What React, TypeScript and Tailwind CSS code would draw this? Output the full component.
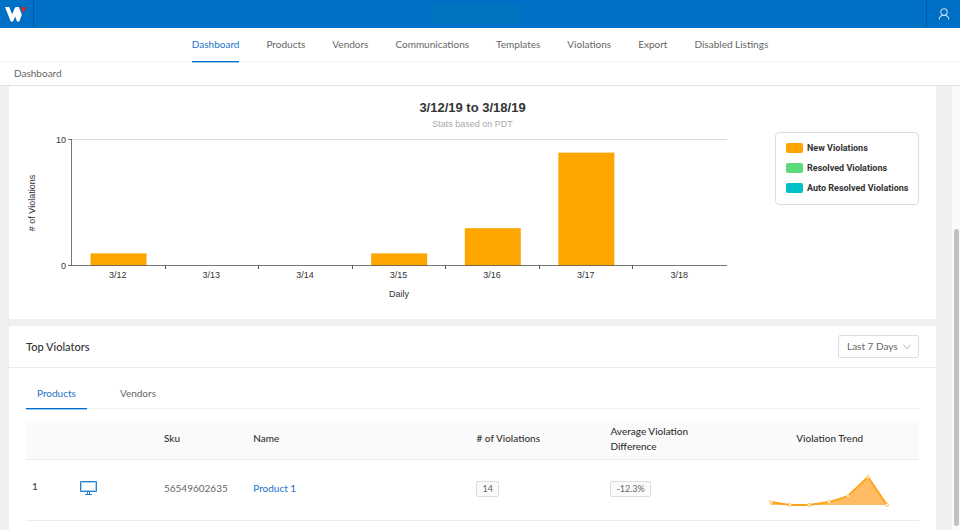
import * as React from 'react'
import {useState} from 'react'
import clsx from 'clsx'

const navItems = ['Dashboard', 'Products', 'Vendors', 'Communications', 'Templates', 'Violations', 'Export', 'Disabled Listings']

const days = [
	{label: '3/12', count: 1},
	{label: '3/13', count: 0},
	{label: '3/14', count: 0},
	{label: '3/15', count: 1},
	{label: '3/16', count: 3},
	{label: '3/17', count: 9},
	{label: '3/18', count: 0},
]

const legend = [
	{label: 'New Violations', color: 'bg-[#ffa500]'},
	{label: 'Resolved Violations', color: 'bg-[#5bdb79]'},
	{label: 'Auto Resolved Violations', color: 'bg-[#00c1c9]'},
]

const trend = [[2, 31], [21, 34], [40, 34], [60, 31], [79, 25], [99, 6], [118, 34]]

function Header() {
	return (
		<header className="flex h-7 bg-[#006fc6]">
			<a href="#" aria-label="Home" className="w-[34px] pl-[5px] flex items-center border-r border-[#005ba5]">
				<svg viewBox="0 0 21 15" className="w-[21px] h-[15px]" aria-hidden="true">
					<path d="M0 0h4.200l2.900 7.300L9.700 1.200C10 .4 10.600 0 11.300 0h2.500L16.800 7.800l-2.200 6c-.5 1.400-2.400 1.400-2.900 0L10.200 9.600l-1.800 4.200c-.6 1.400-2.500 1.400-3 0z" fill="#fff"/>
					<path d="M15.800 .3h5.200L18.400 6z" fill="#ff1a0a"/>
				</svg>
			</a>
			<div className="flex-grow flex items-center justify-center pr-2">
				<div className="w-[92px] h-[18px] bg-[#0074be]"></div>
			</div>
			<button aria-label="Account" className="w-[34px] flex items-center justify-center border-l border-[#005ba5]">
				<svg viewBox="0 0 12 12" className="w-3 h-3" fill="none" stroke="#c4e0f5" strokeWidth="1.1" aria-hidden="true">
					<circle cx="6" cy="4" r="3.200"/>
					<path d="M1.300 11.500C1.300 8.800 3.300 7.200 6 7.200s4.700 1.600 4.700 4.300"/>
				</svg>
			</button>
		</header>
	)
}

function ViolationsChart() {
	const left = 63
	const bottom = 134
	const step = 655 / days.length
	const unit = 12.6

	return (
		<svg viewBox="0 0 766 187" className="flex-1 min-w-0 h-auto text-[9px]" fill="#333" role="img" aria-label="Violations per day">
			<path d="M63 7.500H718" stroke="#dcdcdc"/>
			{days.map((day, i) => (
				<g key={day.label}>
					<rect x={left + step * i + 18.500} y={bottom - day.count * unit} width="56" height={day.count * unit} fill="#ffa500"/>
					{i > 0 && <path d={`M${Math.round(left + step * i) - .5} 134v3`} stroke="#555"/>}
					<text x={left + step * (i + .5) - 1} y="146" textAnchor="middle">{day.label}</text>
				</g>
			))}
			<path d="M59 7.500H63M62.500 7V134M59 133.500H718" stroke="#555" strokeOpacity=".8" fill="none"/>
			<text x="57" y="11" textAnchor="end">10</text>
			<text x="57" y="137" textAnchor="end">0</text>
			<text x="390" y="165" textAnchor="middle">Daily</text>
			<text transform="translate(26 71) rotate(-90)" textAnchor="middle"># of Violations</text>
		</svg>
	)
}

function ChartCard() {
	return (
		<section className="bg-white font-['Liberation_Sans',sans-serif] text-[#333]">
			<h2 className="pt-3 text-[13px] leading-[19px] font-bold text-center">3/12/19 to 3/18/19</h2>
			<p className="text-[9px] leading-[15px] text-center text-[#aaa]">Stats based on PDT</p>
			<div className="flex items-start pr-[17px]">
				<ViolationsChart/>
				<ul className="w-36 h-[73px] px-2.5 pb-px flex flex-col justify-center gap-2 border border-[#ddd] rounded font-[Roboto,sans-serif]">
					{legend.map(item => (
						<li key={item.label} className="flex items-center gap-1 text-[9px] leading-3 font-bold whitespace-nowrap">
							<span className={clsx('w-[17px] h-2.5 rounded-xs shrink-0', item.color)}></span>
							{item.label}
						</li>
					))}
				</ul>
			</div>
		</section>
	)
}

function Sparkline() {
	const line = trend.map(point => point.join(' ')).join('L')

	return (
		<svg viewBox="0 0 122 38" className="w-[122px] h-[38px] mx-auto" role="img" aria-label="Violation trend">
			<path d={`M${line}L2 34z`} fill="#ffa022" fillOpacity=".7"/>
			<path d={`M${line}`} fill="none" stroke="#ffa31a" strokeWidth="1.800"/>
			{trend.map(([x, y]) => <circle key={x} cx={x} cy={y} r="1.500" fill="#fff" stroke="#ffb84d" strokeWidth=".8"/>)}
		</svg>
	)
}

function Tag({children}: {children: React.ReactNode}) {
	return <span className="inline-block px-[5px] text-[9px] leading-[14px] bg-[#fafafa] border border-[#ddd] rounded-xs">{children}</span>
}

function ProductsTable() {
	return (
		<table className="w-full table-fixed mt-3 text-left">
			<thead className="bg-[#fafafa] text-[#333]">
				<tr className="h-[38px] border-b border-[#ececec]">
					<th className="w-[5%]"></th>
					<th className="w-[10%]"></th>
					<th className="w-[10%] px-1 pb-0.5 font-medium">Sku</th>
					<th className="w-[25%] px-1 pb-0.5 font-medium">Name</th>
					<th className="w-[15%] px-1 pb-0.5 font-medium"># of Violations</th>
					<th className="w-[15%] px-1 pb-0.5 font-medium">Average Violation Difference</th>
					<th className="w-[20%] px-1 pb-0.5 font-medium text-center">Violation Trend</th>
				</tr>
			</thead>
			<tbody>
				<tr className="h-[61px] border-b border-[#ececec]">
					<td className="px-1.5 pb-1.5 text-[#333]">1</td>
					<td className="px-2 pb-1">
						<svg viewBox="0 0 18 14" className="w-[18px] h-3.5" fill="none" stroke="#2f7fcf" aria-hidden="true">
							<path d="M2.500 1.500h14v8h-14z" stroke="#a9cbed"/>
							<path d="M1.500 .5h16v10h-16zM8.500 11v2M10.500 11v2M6 13.500h7"/>
						</svg>
					</td>
					<td className="px-1 pb-0.5">56549602635</td>
					<td className="px-1 pb-0.5"><a href="#" className="text-[#1a73c9]">Product 1</a></td>
					<td className="px-1 pb-0.5"><Tag>14</Tag></td>
					<td className="px-1 pb-0.5"><Tag>-12.3%</Tag></td>
					<td className="px-1"><Sparkline/></td>
				</tr>
			</tbody>
		</table>
	)
}

function TopViolators() {
	const [tab, setTab] = useState('Products')

	return (
		<section className="bg-white flex-grow">
			<div className="h-[42px] px-[17px] flex items-center justify-between border-b border-[#ececec]">
				<h2 className="text-[11px] font-medium text-[#333]">Top Violators</h2>
				<div className="relative">
					<select aria-label="Period" className="appearance-none h-[23px] w-[81px] pl-2 border border-[#ddd] rounded-xs bg-white">
						<option>Last 7 Days</option>
						<option>Last 30 Days</option>
					</select>
					<svg viewBox="0 0 8 6" className="absolute right-2 top-[9px] w-2 h-1.5 pointer-events-none" fill="none" stroke="#bbb" aria-hidden="true">
						<path d="M.5 .5L4 5l3.500-4.500"/>
					</svg>
				</div>
			</div>
			<div className="px-[17px] pt-2.5">
				<div role="tablist" className="flex gap-[22px] h-[31px] border-b border-[#f0f0f0]">
					{['Products', 'Vendors'].map(name => (
						<button
							key={name}
							role="tab"
							aria-selected={tab === name}
							onClick={() => setTab(name)}
							className={clsx('h-[31px] px-[11px] border-b', tab === name ? 'border-[#0070cc] text-[#1a73c9] shadow-[0_1px_0_#99c8ee]' : 'border-transparent')}
						>
							{name}
						</button>
					))}
				</div>
				<ProductsTable/>
			</div>
		</section>
	)
}

export default function App() {
	return (
		<div className="h-screen flex flex-col overflow-hidden bg-white font-[Lato,sans-serif] text-[10px] leading-[15px] text-[#666]">
			<Header/>
			<nav className="flex justify-center gap-[27px] h-[34px] border-b border-[#f3f3f3]">
				{navItems.map((item, i) => (
					<a
						key={item}
						href="#"
						className={clsx('h-[34px] flex items-center border-b', i === 0 ? 'border-[#0070cc] text-[#1a73c9] shadow-[0_1px_0_#99c8ee]' : 'border-transparent')}
					>
						{item}
					</a>
				))}
			</nav>
			<div className="h-6 px-3.5 pb-px flex items-center border-b border-[#e2e2e2]">Dashboard</div>

			<div className="flex-1 min-h-0 flex bg-[#efefef]">
				<main className="flex-grow flex flex-col gap-[7px] pl-[9px] pr-4">
					<ChartCard/>
					<TopViolators/>
				</main>
				<div className="w-2 shrink-0 bg-[#fafafa] pt-[143px] pb-1 flex justify-center">
					<div className="w-[5px] rounded-full bg-[#c1c1c1]"></div>
				</div>
			</div>
		</div>
	)
}
